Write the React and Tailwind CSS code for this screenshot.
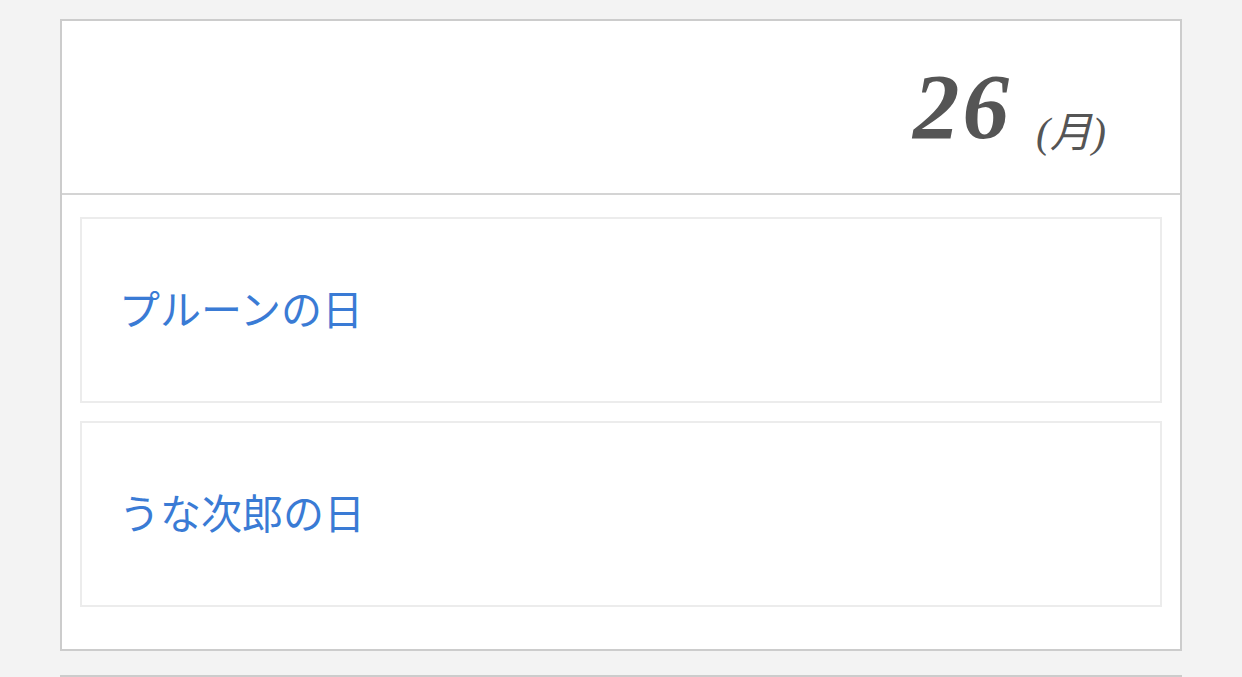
const events = ['プルーンの日', 'うな次郎の日'];

function DayCard({ day, weekday, items }) {
  return (
    <section className="mx-[60px] border-2 border-[#cccccc] bg-white">
      <header className="flex h-[174px] items-end justify-end border-b-2 border-[#d4d4d4] pb-[40px] pr-[74px] text-[#555555]">
        <span className="font-['Liberation_Serif',serif] text-[93px] font-bold italic leading-none tracking-[3px]">
          {day}
        </span>
        <span className="mb-[-1px] ml-[24px] font-['Liberation_Serif','Noto_Sans_CJK_JP',serif] text-[42px] italic leading-none">
          ({weekday})
        </span>
      </header>
      <ul className="flex flex-col gap-[18px] px-[18px] pb-[42px] pt-[22px]">
        {items.map((name) => (
          <li key={name} className="flex h-[186px] items-center border-2 border-[#ececec] pl-[37px]">
            <a className="mb-[6px] font-['Noto_Sans_CJK_JP',sans-serif] text-[41px] leading-none text-[#3a7bd5]">{name}</a>
          </li>
        ))}
      </ul>
    </section>
  );
}

export default function App() {
  return (
    <div className="h-[677px] overflow-hidden bg-[#f3f3f3] pt-[19px]">
      <DayCard day="26" weekday="月" items={events} />
      <div className="mx-[60px] mt-[24px] h-[40px] border-t-2 border-[#cccccc] bg-white" />
    </div>
  );
}
